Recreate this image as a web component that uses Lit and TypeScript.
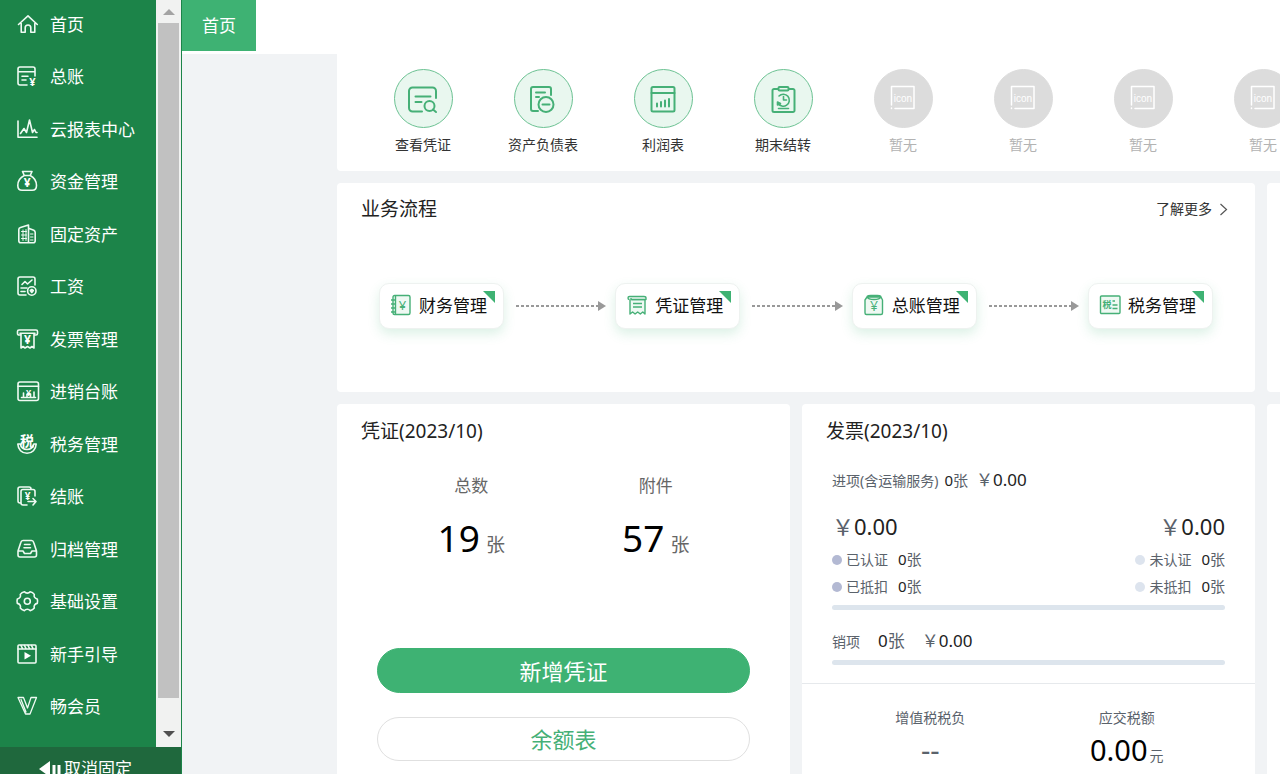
import { LitElement, html, svg, css, SVGTemplateResult } from "lit";
import { customElement } from "lit/decorators.js";

interface Entry {
  label: string;
  icon: SVGTemplateResult;
}

const menu: Entry[] = [
  {
    label: "首页",
    icon: svg`<path d="M2.500 11.500 12 2.800l9.300 8.700M5.200 10.500v8.800h4v-4.500a2.800 2.800 0 0 1 5.600 0v4.500h4v-8.800"/>`,
  },
  {
    label: "总账",
    icon: svg`<path d="M19 11V4a2 2 0 0 0-2-2H4a2 2 0 0 0-2 2v14a2 2 0 0 0 2 2h7M2 6.800h17M6 11.200h6M6 15h4"/><text x="16.500" y="20.500" font-size="11">¥</text>`,
  },
  {
    label: "云报表中心",
    icon: svg`<path d="M2 3v16.300h19M4.500 15.500 8 10.500l2.500 4L13.500 2l3 12.500 2-3 1.500 3h1"/>`,
  },
  {
    label: "资金管理",
    icon: svg`<path d="M6.500 1.500h9.500l-1.800 4H8.300zM8.300 5.500C4.300 7.500 1.800 11.500 1.800 15.500c0 3 1.500 4.700 4.200 4.700h10.200c2.700 0 4.300-1.700 4.300-4.700 0-4-2.500-8-6.300-10"/><text x="11.200" y="16.800" font-size="12">¥</text>`,
  },
  {
    label: "固定资产",
    icon: svg`<path d="M12.500 19.800V2L4.500 4.500C3.500 4.800 2.800 5.500 2.800 6.500v11.300a2 2 0 0 0 2 2h12.400a2 2 0 0 0 2-2V9.500c0-1-.5-1.700-1.400-2.200l-5.300-2.100"/><path d="M5.500 8.500h5M5.500 12h5M5.500 15.500h5M7 7v10.500M10 6.500v11M14.500 11h2.500m-2.500 3h2.500m-2.500 3h2.500" stroke-width="1"/>`,
  },
  {
    label: "工资",
    icon: svg`<path d="M19 10V4a2 2 0 0 0-2-2H4a2 2 0 0 0-2 2v14a2 2 0 0 0 2 2h6M6 9.500 9 6.500l2.500 2.500L16 5M5 13h6M5 16.500h4"/><circle cx="15.800" cy="16" r="4.200"/><path d="M14.300 15.500l1.500-1 1.500 1-1.500 2z"/>`,
  },
  {
    label: "发票管理",
    icon: svg`<path d="M4 7H3a1.500 1.500 0 0 1-1.500-1.500v-2C1.500 2.500 2 2 3 2h17c1 0 1.500.5 1.500 1.500v2C21.500 6.500 21 7 20 7h-1M4 5.200h15M5 5.200V20l2-1.500L9 20l2.500-1.500L14 20l2-1.500 2 1.500V5.200"/><text x="11.500" y="16" font-size="12">¥</text>`,
  },
  {
    label: "进销台账",
    icon: svg`<rect x="2" y="2" width="20.500" height="18.500" rx="2"/><path d="M2 6.200h20.500M5.500 17.500h14M7.500 17v-4m3.500 4v-2.500m3.500 2.500v-3m3.500 3v-5"/><text x="12.500" y="15.500" font-size="9">¥</text>`,
  },
  {
    label: "税务管理",
    icon: svg`<path d="M4.200 11H1.800c.3 5.500 4 9.300 9.200 9.300s8.900-3.800 9.200-9.300h-2.400c-.8 3.500-3.300 5.500-6.800 5.500S5 14.500 4.200 11z"/><text x="11" y="13" font-size="14" stroke="#fff">税</text>`,
  },
  {
    label: "结账",
    icon: svg`<path d="M15 4.500V4a2 2 0 0 0-2-2H4a2 2 0 0 0-2 2v12a2 2 0 0 0 2 2h1M19 11V6.500a2 2 0 0 0-2-2H7a2 2 0 0 0-2 2V18a2 2 0 0 0 2 2h4M12 16.500h8M17 13.500l3 3-3 3.500"/><text x="11.500" y="14.500" font-size="10">¥</text>`,
  },
  {
    label: "归档管理",
    icon: svg`<path d="M2 13 4.800 4.500C5.200 3 5.800 2.500 7 2.500h8.500c1.200 0 1.800.5 2.200 2l2.800 8.500M2 13v4a2 2 0 0 0 2 2h14.500a2 2 0 0 0 2-2v-4h-4.500L14.500 15.500h-6L7 13zM8.500 6.500h5.500M8 9.800h6.500"/>`,
  },
  {
    label: "基础设置",
    icon: svg`<path d="M8.500 1.800c1.200 1.800 4.400 1.800 5.600 0 1.700.3 3.200 1.200 4.200 2.600-.8 2.200.7 4.300 3 4.600.4 1.500.4 2.800 0 4.400-2.300.3-3.800 2.400-3 4.600-1 1.400-2.500 2.200-4.200 2.600-1.200-1.800-4.400-1.800-5.600 0-1.700-.4-3.200-1.200-4.200-2.600.8-2.200-.7-4.300-3-4.600-.4-1.600-.4-2.900 0-4.400 2.300-.3 3.800-2.400 3-4.600 1-1.400 2.500-2.300 4.200-2.600z"/><circle cx="11.300" cy="11.200" r="3"/>`,
  },
  {
    label: "新手引导",
    icon: svg`<rect x="2" y="2" width="18" height="18" rx="1"/><path d="M2 6h18M5 2.500l1.500 3m2-3 1.500 3m2-3 1.500 3m2-3 1.500 3"/><path class="solid" d="M8.500 9v7.500l6.500-3.700z"/>`,
  },
  {
    label: "畅会员",
    icon: svg`<path d="M2 2.500h5.500L11.500 13 15 2.500h5.500L14 19H9.500zM5 4.500l5 12.500" stroke-width="1.300"/>`,
  },
];

const shortcuts: Entry[] = [
  {
    label: "查看凭证",
    icon: svg`<path d="M28 12V5a3.500 3.500 0 0 0-3.500-3.500h-20A3.500 3.500 0 0 0 1 5v17a3.500 3.500 0 0 0 3.500 3.500H14M7.500 10.500h15M7.500 16h6"/><circle cx="21.500" cy="20" r="5"/><path d="M25 23.500l3 2.500"/>`,
  },
  {
    label: "资产负债表",
    icon: svg`<path d="M23 9V3a2 2 0 0 0-2-2H5a2 2 0 0 0-2 2v20a2 2 0 0 0 2 2h5M8 6.500h9M8 11h3"/><circle cx="18" cy="18.500" r="7.500"/><path d="M14.500 18.500h7"/>`,
  },
  {
    label: "利润表",
    icon: svg`<rect x="3.500" y="1" width="23" height="24.500" rx="1.500"/><path d="M3.500 7h23M9 20.500v-3m4 3v-4.500m4 4.500v-6m4 6v-7.500"/>`,
  },
  {
    label: "期末结转",
    icon: svg`<path d="M10 3H6a1.500 1.500 0 0 0-1.500 1.500v20A1.500 1.500 0 0 0 6 26h19a1.500 1.500 0 0 0 1.500-1.500v-20A1.500 1.500 0 0 0 25 3h-4"/><rect x="10.500" y="1" width="10" height="3.500" rx="1"/><path d="M11 10a6 6 0 1 1-1 7M9.500 19v-3l3 1.500zM15.500 10.500V14h3M10.500 22.500h10" stroke-width="1.600"/>`,
  },
];

const steps: Entry[] = [
  {
    label: "财务管理",
    icon: svg`<rect x="3" y="1.500" width="17" height="19" rx="1.500"/><path d="M5.500 2v18M1 6h4m-4 4h4m-4 4h4m-4 4h4"/><text x="12.500" y="15.500" font-size="13">¥</text>`,
  },
  {
    label: "凭证管理",
    icon: svg`<path d="M5.500 5.500H19V20l-2.200-2-2.500 2-2.600-2-2.600 2-2.500-2-2.600 2V5.500"/><path d="M3.500 2.500H18c1.200 0 2 .5 2 1.500v1.500H5V4M3.500 2.500C1.500 2.500 1.500 5.500 3.500 5.500M7 9.500h9M7 13h9"/>`,
  },
  {
    label: "总账管理",
    icon: svg`<path d="M4 3h14l1.500 3v13c0 1-.5 1.500-1.500 1.500H3.500C2.500 20.500 2 20 2 19V6zM4 3c0-2 3-1.500 7-1.500s7-.5 7 1.500c-1 2-3 2.500-7 2.500S5 5 4 3z"/><text x="11" y="17" font-size="14">¥</text>`,
  },
  {
    label: "税务管理",
    icon: svg`<rect x="1.500" y="2" width="19.500" height="17.500" rx="1"/><path d="M13.500 7h2.500m-2.500 4h5m-5 3.500h5"/><text x="8" y="14" font-size="9" font-weight="700">税</text>`,
  },
];

@customElement("app-sidebar")
class AppSidebar extends LitElement {
  static styles = css`
    :host {
      display: flex;
      flex-direction: column;
      box-sizing: border-box;
      height: 100vh;
      width: 182px;
      flex: none;
      overflow: hidden;
      border-right: 1px solid #1c8449;
      background: #1c8449;
    }
    .area {
      display: flex;
      flex: 1;
      min-height: 0;
    }
    .menu {
      display: flex;
      flex-direction: column;
      justify-content: space-between;
      flex: 1;
      overflow: hidden;
      padding-bottom: 15px;
    }
    .item {
      display: flex;
      align-items: center;
      gap: 12px;
      height: 49px;
      flex: none;
      padding-left: 16px;
      color: #fff;
      font-size: 17px;
      line-height: 24px;
      text-decoration: none;
      white-space: nowrap;
    }
    .item svg {
      width: 22px;
      height: 22px;
      flex: none;
      overflow: visible;
      margin-bottom: 2px;
      fill: none;
      stroke: #effaf3;
      stroke-width: 1.6;
      stroke-linejoin: round;
      stroke-linecap: round;
    }
    .item text {
      fill: #fff;
      stroke: none;
      text-anchor: middle;
      font-weight: 700;
    }
    .item .solid {
      fill: #fff;
      stroke: none;
    }
    .scroll {
      display: flex;
      flex-direction: column;
      width: 25px;
      background: #f1f2f1;
    }
    .arrow {
      display: flex;
      align-items: center;
      justify-content: center;
      height: 23px;
      padding: 0;
      border: 0;
      background: none;
    }
    .arrow svg {
      width: 12px;
      height: 6px;
      fill: #a3a3a3;
    }
    .arrow.down {
      padding-bottom: 3px;
    }
    .arrow.down svg {
      fill: #505050;
    }
    .thumb {
      flex: 1;
      margin: 0 2px 26px;
      background: #c1c1c1;
    }
    .pin {
      display: flex;
      justify-content: center;
      align-items: center;
      gap: 3px;
      box-sizing: border-box;
      height: 27px;
      flex: none;
      padding: 16px 10px 0 0;
      border: 0;
      background: #1f683d;
      color: #fff;
      font: inherit;
      font-size: 17px;
      line-height: 24px;
      white-space: nowrap;
    }
    .pin svg {
      width: 22px;
      height: 16px;
      fill: #fff;
      flex: none;
    }
  `;

  render() {
    return html`
      <div class="area">
        <nav class="menu">
          ${menu.map(
            (m) => html`<a class="item" href="#"><svg viewBox="0 0 22 22">${m.icon}</svg><span>${m.label}</span></a>`
          )}
        </nav>
        <div class="scroll">
          <button class="arrow" aria-label="向上滚动"><svg viewBox="0 0 12 6"><path d="M0 6 6 0l6 6z" /></svg></button>
          <div class="thumb"></div>
          <button class="arrow down" aria-label="向下滚动"><svg viewBox="0 0 12 6"><path d="M0 0h12L6 6z" /></svg></button>
        </div>
      </div>
      <button class="pin">
        <svg viewBox="0 0 22 16"><path d="M0 8 11 0v16zM13.500 4h3v9h-3zM18.500 4h3v9h-3z" /></svg><span>取消固定</span>
      </button>
    `;
  }
}

@customElement("quick-links")
class QuickLinks extends LitElement {
  static styles = css`
    :host {
      display: flex;
      overflow: hidden;
      padding: 15px 0 15px 26px;
      background: #fff;
      border-radius: 0 0 0 4px;
    }
    .link {
      display: flex;
      flex-direction: column;
      align-items: center;
      gap: 6px;
      width: 120px;
      flex: none;
      color: #333;
      font-size: 14px;
      line-height: 22px;
      text-decoration: none;
    }
    .disc {
      display: flex;
      align-items: center;
      justify-content: center;
      box-sizing: border-box;
      width: 59px;
      height: 59px;
      border: 1px solid #6cc293;
      border-radius: 50%;
      background: #e9f7ef;
    }
    .disc svg {
      width: 30px;
      height: 27px;
      overflow: visible;
      margin-top: 2px;
      fill: none;
      stroke: #46b077;
      stroke-width: 2;
      stroke-linecap: round;
      stroke-linejoin: round;
    }
    .empty {
      color: #b3b3b3;
    }
    .empty .disc {
      background: #dcdcdc;
      border-color: #dcdcdc;
    }
    .empty svg {
      margin: 0;
      stroke: #fff;
      stroke-width: 1.5;
    }
    .empty text {
      fill: #fff;
      stroke: none;
      font: 10px "Liberation Sans", sans-serif;
      text-anchor: middle;
    }
  `;

  render() {
    return html`
      ${shortcuts.map(
        (s) => html`<a class="link" href="#"><span class="disc"><svg viewBox="0 0 30 27">${s.icon}</svg></span><span>${s.label}</span></a>`
      )}
      ${[0, 1, 2, 3].map(
        () => html`<a class="link empty" href="#"
          ><span class="disc"
            ><svg viewBox="0 0 30 27"><path d="M3.500 20V1.500h22.500v22H7M3.500 23v.5" /><text x="15" y="17">icon</text></svg></span
          ><span>暂无</span></a
        >`
      )}
    `;
  }
}

@customElement("process-panel")
class ProcessPanel extends LitElement {
  static styles = css`
    :host {
      display: block;
      box-sizing: border-box;
      padding: 12px 24px 63px;
      border-radius: 4px;
      background: #fff;
    }
    .head {
      display: flex;
      align-items: center;
      justify-content: space-between;
    }
    .title {
      margin: 0;
      color: #222;
      font-size: 19px;
      font-weight: inherit;
      line-height: 28px;
    }
    .more {
      display: flex;
      align-items: center;
      gap: 7px;
      padding-right: 3px;
      color: #333;
      font-size: 14px;
      line-height: 22px;
      text-decoration: none;
    }
    .more svg {
      width: 9px;
      height: 13px;
      fill: none;
      stroke: #555;
      stroke-width: 1.2;
    }
    .steps {
      display: flex;
      align-items: center;
      padding: 60px 18px 0;
    }
    .step {
      position: relative;
      display: flex;
      align-items: center;
      gap: 7px;
      box-sizing: border-box;
      width: 125px;
      height: 46px;
      flex: none;
      padding: 0 0 0 10px;
      border: 1px solid #eef2f0;
      border-radius: 10px;
      background: #fff;
      box-shadow: 0 5px 12px rgba(62, 178, 115, 0.18);
      color: #111;
      font: inherit;
      font-size: 17px;
      line-height: 24px;
      white-space: nowrap;
    }
    .step svg {
      width: 22px;
      height: 22px;
      flex: none;
      overflow: visible;
      margin-bottom: 2px;
      fill: #eff9f3;
      stroke: #46b077;
      stroke-width: 1.4;
      stroke-linejoin: round;
    }
    .step text {
      fill: #46b077;
      stroke: none;
      text-anchor: middle;
    }
    .step::after {
      content: "";
      position: absolute;
      top: 7px;
      right: 8px;
      border-style: solid;
      border-width: 0 12px 12px 0;
      border-color: transparent #3eb273 transparent transparent;
    }
    .link {
      display: flex;
      align-items: center;
      flex: 1;
      margin: 0 9px 0 12px;
    }
    .dots {
      flex: 1;
      height: 2px;
      background: repeating-linear-gradient(90deg, #999 0 3px, transparent 3px 5px);
    }
    .tip {
      border-style: solid;
      border-width: 5px 0 5px 8px;
      border-color: transparent transparent transparent #999;
    }
  `;

  render() {
    return html`
      <div class="head">
        <h2 class="title">业务流程</h2>
        <a class="more" href="#">了解更多<svg viewBox="0 0 9 13"><path d="M1.500 1 7.500 6.500l-6 5.500" /></svg></a>
      </div>
      <div class="steps">
        ${steps.map(
          (s, i) => html`
            ${i ? html`<div class="link"><span class="dots"></span><span class="tip"></span></div>` : ""}
            <button class="step"><svg viewBox="0 0 22 22">${s.icon}</svg><span>${s.label}</span></button>
          `
        )}
      </div>
    `;
  }
}

@customElement("voucher-panel")
class VoucherPanel extends LitElement {
  static styles = css`
    :host {
      display: block;
      border-radius: 4px;
      background: #fff;
      padding: 13px 40px 40px;
    }
    .title {
      margin: 0 -16px;
      color: #222;
      font-size: 19px;
      font-weight: inherit;
      line-height: 28px;
    }
    .stats {
      display: grid;
      grid-template-columns: 1fr 1fr;
      padding: 29px 2px 75px;
      text-align: center;
    }
    .name {
      color: #666;
      font-size: 17px;
      line-height: 24px;
    }
    .value {
      padding-top: 12px;
      color: #666;
      font-size: 19px;
      line-height: 56px;
    }
    .num {
      margin-right: 6px;
      color: #000;
      font-size: 37px;
    }
    .btn {
      display: block;
      box-sizing: border-box;
      width: 100%;
      height: 44px;
      border: 1px solid #e0e0e0;
      border-radius: 23px;
      background: #fff;
      color: #46b077;
      font: inherit;
      font-size: 22px;
      line-height: 32px;
    }
    .btn.main {
      height: 45px;
      margin-bottom: 24px;
      border-color: #3eb273;
      background: #3eb273;
      color: #fff;
    }
  `;

  render() {
    return html`
      <h2 class="title">凭证(2023/10)</h2>
      <div class="stats">
        <div>
          <div class="name">总数</div>
          <div class="value"><span class="num">19</span>张</div>
        </div>
        <div>
          <div class="name">附件</div>
          <div class="value"><span class="num">57</span>张</div>
        </div>
      </div>
      <button class="btn main">新增凭证</button>
      <button class="btn">余额表</button>
    `;
  }
}

@customElement("invoice-panel")
class InvoicePanel extends LitElement {
  static styles = css`
    :host {
      display: block;
      border-radius: 4px;
      background: #fff;
      padding-top: 13px;
      color: #5a626b;
      font-size: 14px;
    }
    .title {
      margin: 0;
      padding-left: 24px;
      color: #222;
      font-size: 19px;
      font-weight: inherit;
      line-height: 28px;
    }
    .body {
      padding: 21px 30px 18px;
      border-bottom: 1px solid #e6e9ec;
    }
    .row {
      display: flex;
      align-items: baseline;
      line-height: 27px;
    }
    .split {
      justify-content: space-between;
    }
    .count {
      margin-left: 6px;
      font-size: 15px;
    }
    .digit {
      color: #222;
    }
    .cash {
      margin-left: 8px;
      font-size: 17px;
    }
    .total {
      padding: 15px 0 3px;
      font-size: 22px;
      line-height: 34px;
    }
    .mark {
      display: flex;
      align-items: center;
      gap: 4px;
    }
    .mark::before {
      content: "";
      width: 10px;
      height: 10px;
      border-radius: 50%;
      background: #b3b9d3;
    }
    .mark.off::before {
      background: #dde4ee;
    }
    .bar {
      height: 5px;
      margin-top: 5px;
      border-radius: 3px;
      background: #dde5ed;
    }
    .sales {
      padding-top: 17px;
    }
    .sales .count {
      margin-left: 18px;
      font-size: 17px;
    }
    .sales .cash {
      margin-left: 17px;
    }
    .foot {
      display: grid;
      grid-template-columns: 1fr 1fr;
      padding: 23px 30px 40px;
      text-align: center;
      line-height: 22px;
    }
    .big {
      line-height: 42px;
    }
    .big .digit {
      margin-right: 2px;
      color: #000;
      font-size: 29px;
    }
    .none {
      font-size: 29px;
      line-height: 42px;
    }
  `;

  private mark(label: string, off = false) {
    return html`<span class="mark ${off ? "off" : ""}">${label}<span class="count"><span class="digit">0</span>张</span></span>`;
  }

  render() {
    return html`
      <h2 class="title">发票(2023/10)</h2>
      <div class="body">
        <div class="row">
          进项(含运输服务)<span class="count"><span class="digit">0</span>张</span>
          <span class="cash">￥<span class="digit">0.00</span></span>
        </div>
        <div class="row split total">
          <span>￥<span class="digit">0.00</span></span><span>￥<span class="digit">0.00</span></span>
        </div>
        <div class="row split">${this.mark("已认证")}${this.mark("未认证", true)}</div>
        <div class="row split">${this.mark("已抵扣")}${this.mark("未抵扣", true)}</div>
        <div class="bar"></div>
        <div class="row sales">
          销项<span class="count"><span class="digit">0</span>张</span>
          <span class="cash">￥<span class="digit">0.00</span></span>
        </div>
        <div class="bar"></div>
      </div>
      <div class="foot">
        <div>
          <div>增值税税负</div>
          <div class="none">--</div>
        </div>
        <div>
          <div>应交税额</div>
          <div class="big"><span class="digit">0.00</span>元</div>
        </div>
      </div>
    `;
  }
}

@customElement("app-root")
class AppRoot extends LitElement {
  static styles = css`
    :host {
      display: flex;
      height: 100vh;
      overflow: hidden;
      background: #f1f3f5;
      font-family: "Noto Sans", "Noto Sans CJK SC", sans-serif;
      font-weight: 400;
    }
    .main {
      display: flex;
      flex-direction: column;
      flex: 1;
      min-width: 0;
      overflow: hidden;
    }
    .tabs {
      height: 54px;
      flex: none;
      background: #fff;
    }
    .tab {
      height: 51px;
      padding: 0 20px;
      border: 0;
      background: #3eb273;
      color: #fff;
      font: inherit;
      font-size: 17px;
      line-height: 24px;
    }
    .content {
      display: grid;
      grid-template-columns: 1fr 1fr 13px;
      gap: 12px;
      padding-left: 155px;
    }
    .all {
      grid-column: 1 / -1;
    }
    .wide {
      grid-column: span 2;
    }
    .side {
      border-radius: 4px 0 0 4px;
      background: #fff;
    }
  `;

  render() {
    return html`
      <app-sidebar></app-sidebar>
      <div class="main">
        <header class="tabs"><button class="tab">首页</button></header>
        <main class="content">
          <quick-links class="all"></quick-links>
          <process-panel class="wide"></process-panel>
          <div class="side"></div>
          <voucher-panel></voucher-panel>
          <invoice-panel></invoice-panel>
          <div class="side"></div>
        </main>
      </div>
    `;
  }
}
